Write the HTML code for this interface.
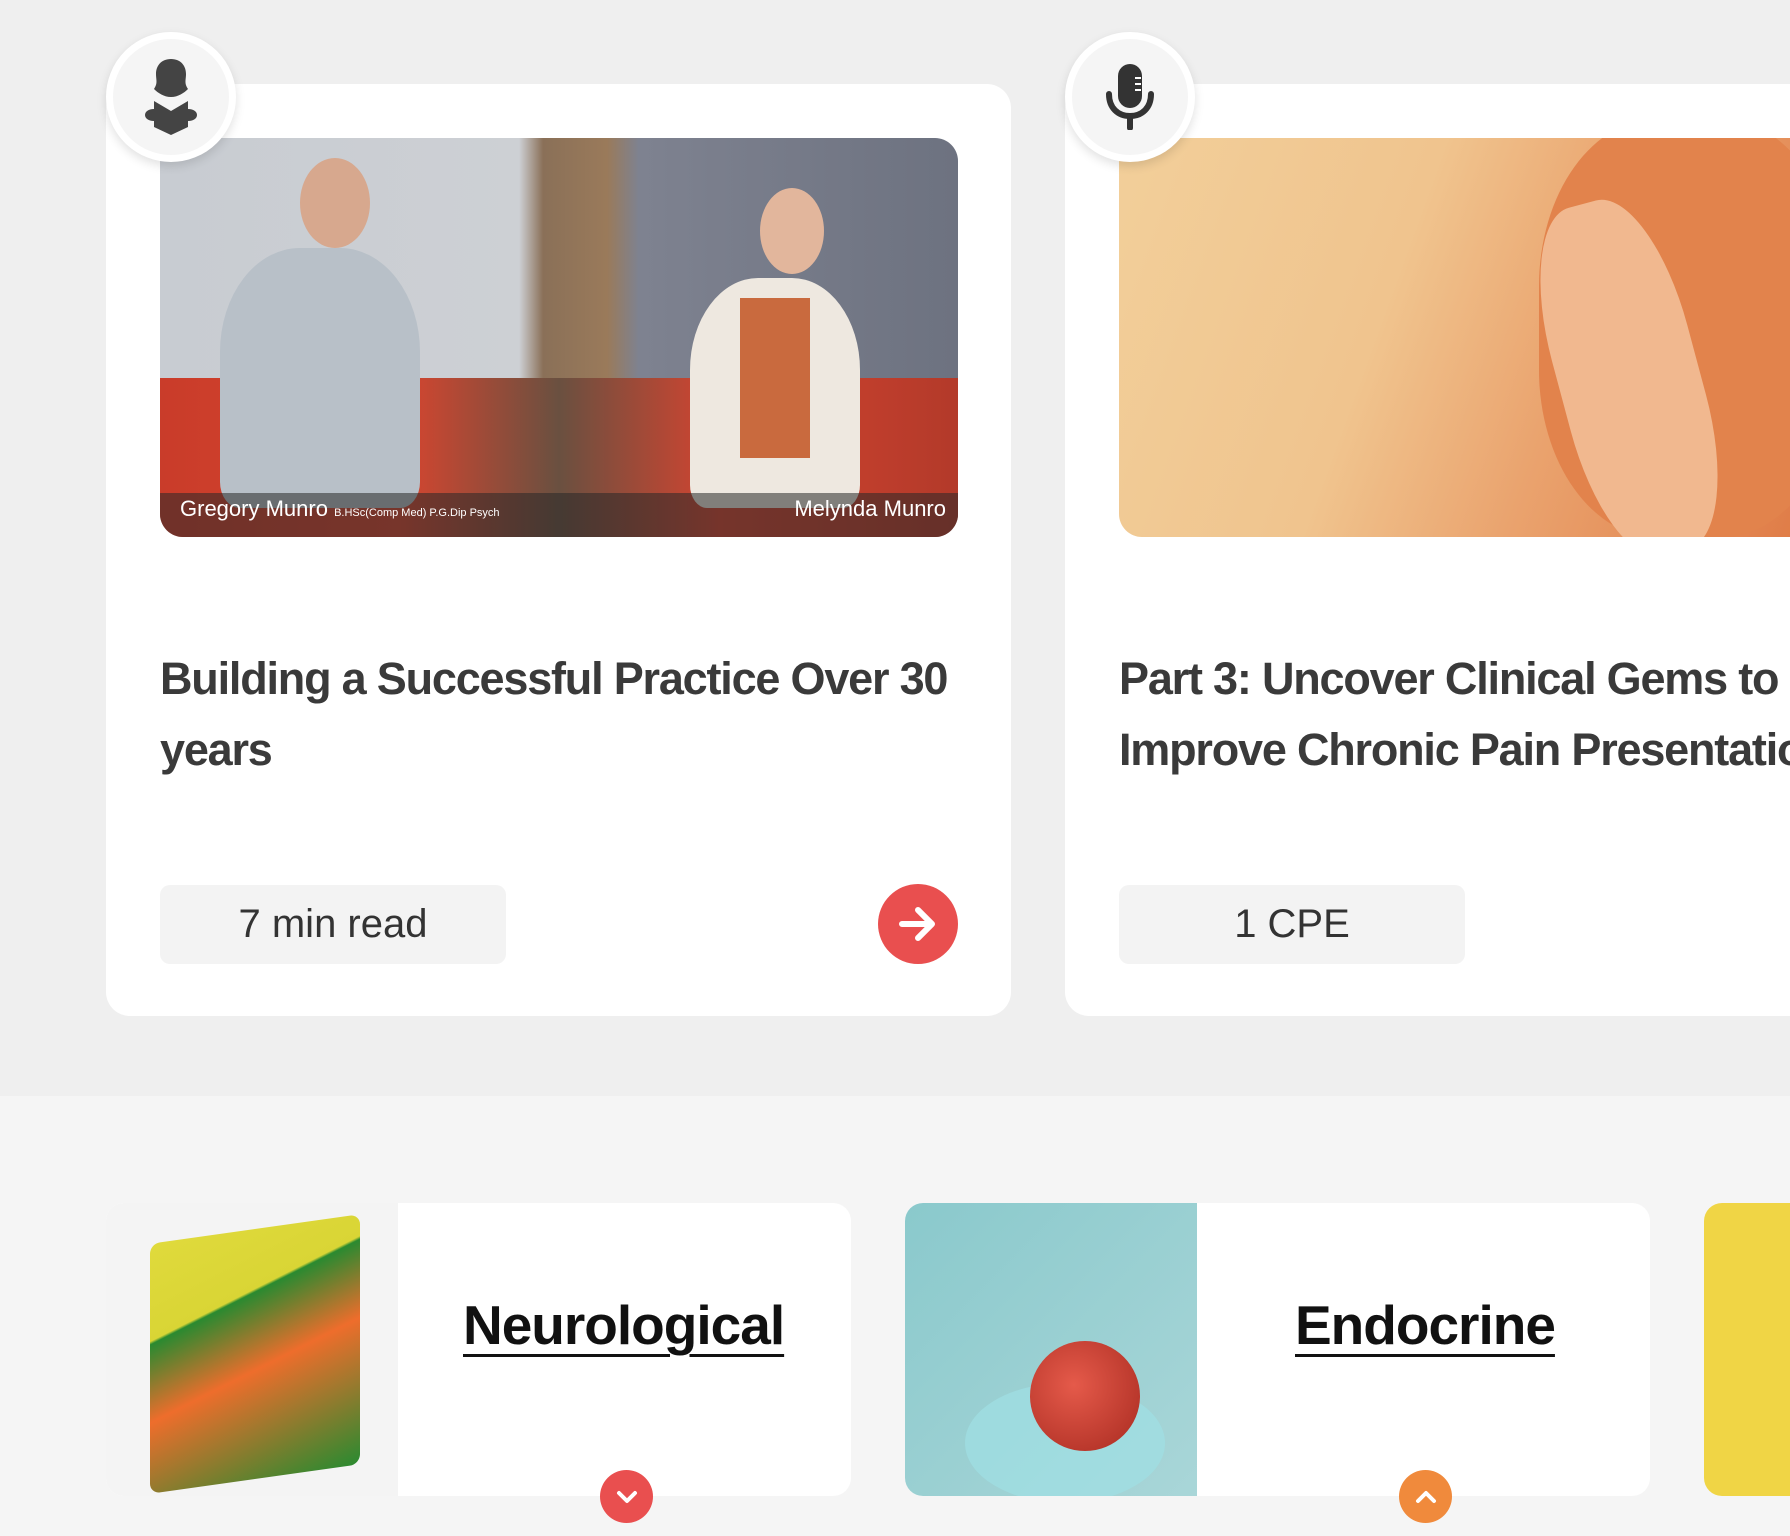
<!DOCTYPE html>
<html><head><meta charset="utf-8"><style>
*{margin:0;padding:0;box-sizing:border-box}
html{width:1790px;height:1536px;overflow:hidden}
body{width:1790px;height:1536px;overflow:hidden;background:#efefef;font-family:"Liberation Sans",sans-serif;position:relative;color:#333}
.abs{position:absolute}
.card{background:#fff;border-radius:24px}
.ico{width:130px;height:130px;border-radius:50%;background:#f5f5f5;border:7px solid #fff;box-shadow:0 4px 10px rgba(0,0,0,.12);display:flex;align-items:center;justify-content:center}
.title{font-size:45px;font-weight:bold;line-height:71px;color:#3a3a3a;letter-spacing:-1.2px}
.pill{background:#f3f3f3;border-radius:10px;font-size:40px;display:flex;align-items:center;justify-content:center;color:#333}
.bot{background:#f5f5f5}
.cat{font-size:55px;font-weight:bold;color:#111;text-decoration:underline;text-underline-offset:10px;text-decoration-thickness:3px;letter-spacing:-1px}
.chev{width:53px;height:53px;border-radius:50%;display:flex;align-items:center;justify-content:center}
</style></head><body>
<div class="abs card" style="left:106px;top:84px;width:905px;height:932px"></div>
<div class="abs card" style="left:1065px;top:84px;width:725px;height:932px;border-radius:24px 0 0 24px"></div>

<div class="abs" style="left:160px;top:138px;width:798px;height:399px;border-radius:23px;overflow:hidden;background:linear-gradient(90deg,#c8ccd2 0%,#cdd0d4 45%,#8a7058 48%,#9a7a5a 56%,#7e8290 60%,#6d7280 100%)">
 <div class="abs" style="left:0;top:240px;width:798px;height:160px;background:linear-gradient(90deg,#c93c2a,#d8452f 30%,#6a5040 50%,#d44430 70%,#b33a2a)"></div>
 <div class="abs" style="left:60px;top:110px;width:200px;height:260px;border-radius:40% 40% 10% 10%;background:#b8c0c8"></div>
 <div class="abs" style="left:140px;top:20px;width:70px;height:90px;border-radius:50%;background:#d7a88e"></div>
 <div class="abs" style="left:530px;top:140px;width:170px;height:230px;border-radius:40% 40% 10% 10%;background:#eee8e0"></div>
 <div class="abs" style="left:580px;top:160px;width:70px;height:160px;background:#c96a3e"></div>
 <div class="abs" style="left:600px;top:50px;width:64px;height:86px;border-radius:50%;background:#e2b69c"></div>
 <div class="abs" style="left:0;top:355px;width:798px;height:44px;background:rgba(40,40,40,.55)"></div>
 <div class="abs" style="left:20px;top:358px;color:#fff;font-size:22px">Gregory Munro <span style="font-size:11px">B.HSc(Comp Med) P.G.Dip Psych</span></div>
 <div class="abs" style="right:12px;top:358px;color:#fff;font-size:22px">Melynda Munro</div>
</div>

<div class="abs" style="left:1119px;top:138px;width:671px;height:399px;border-radius:23px 0 0 23px;overflow:hidden;background:linear-gradient(110deg,#f2cf9a 0%,#f0c48e 40%,#eaa36e 65%,#e07d48 100%)">
 <div class="abs" style="left:420px;top:-20px;width:300px;height:420px;border-radius:40%;background:#e2834c"></div>
 <div class="abs" style="left:440px;top:60px;width:140px;height:360px;border-radius:40%;background:#f1b88f;transform:rotate(-15deg)"></div>
</div>

<div class="abs ico" style="left:106px;top:32px">
<svg width="60" height="76" viewBox="0 0 60 76"><path d="M30 0C20 0 15 7 15 15c0 6 2 9 -2 15c4 4 10 8 17 8s13-4 17-8c-4-6-2-9-2-15C45 7 40 0 30 0z" fill="#444"/><path d="M13 42l17 10 17-10v8c6 0 9 3 9 6s-3 6-9 6v6l-17 8-17-8v-6c-6 0-9-3-9-6s3-6 9-6z" fill="#444"/></svg>
</div>
<div class="abs ico" style="left:1065px;top:32px">
<svg width="50" height="66" viewBox="0 0 50 66"><rect x="13" y="0" width="24" height="44" rx="12" fill="#333"/><path d="M4 30c0 14 9 22 21 22s21-8 21-22" fill="none" stroke="#333" stroke-width="6" stroke-linecap="round"/><path d="M25 52v12" stroke="#333" stroke-width="6" stroke-linecap="round"/><path d="M30 14h6M30 20h6M30 26h6" stroke="#fff" stroke-width="2"/></svg>
</div>

<div class="abs title" style="left:160px;top:643px;width:800px">Building a Successful Practice Over 30<br>years</div>
<div class="abs title" style="left:1119px;top:643px;width:800px;white-space:nowrap">Part 3: Uncover Clinical Gems to<br>Improve Chronic Pain Presentations</div>

<div class="abs pill" style="left:160px;top:885px;width:346px;height:79px">7 min read</div>
<div class="abs pill" style="left:1119px;top:885px;width:346px;height:79px">1 CPE</div>
<div class="abs" style="left:878px;top:884px;width:80px;height:80px;border-radius:50%;background:#e94f4f;display:flex;align-items:center;justify-content:center">
<svg width="40" height="36" viewBox="0 0 40 36"><path d="M4 18h30M20 4l14 14-14 14" fill="none" stroke="#fff" stroke-width="6" stroke-linecap="round" stroke-linejoin="round"/></svg></div>

<div class="abs bot" style="left:0;top:1096px;width:1790px;height:440px"></div>

<div class="abs card" style="left:106px;top:1203px;width:745px;height:293px;border-radius:18px;overflow:hidden">
 <div class="abs" style="left:0;top:0;width:292px;height:293px;background:#f4f4f4">
  <div class="abs" style="left:44px;top:26px;width:210px;height:250px;background:linear-gradient(160deg,#e0da3c 0%,#d9d535 30%,#2a8a30 31%,#ee6d2c 55%,#2a8a30 100%);transform:skewY(-8deg);border-radius:10px"></div>
 </div>
</div>
<div class="abs card" style="left:905px;top:1203px;width:745px;height:293px;border-radius:18px;overflow:hidden">
 <div class="abs" style="left:0;top:0;width:292px;height:293px;background:linear-gradient(135deg,#8ac9cc,#a9d6d8)">
  <div class="abs" style="left:60px;top:180px;width:200px;height:120px;border-radius:50%;background:#9fe0e4;opacity:.7"></div>
  <div class="abs" style="left:125px;top:138px;width:110px;height:110px;border-radius:50%;background:radial-gradient(circle at 40% 40%,#e55a4a,#a82a20)"></div>
 </div>
</div>
<div class="abs card" style="left:1704px;top:1203px;width:86px;height:293px;border-radius:18px 0 0 18px;background:#f0d545"></div>

<div class="abs cat" style="left:463px;top:1293px">Neurological</div>
<div class="abs cat" style="left:1295px;top:1293px">Endocrine</div>

<div class="abs chev" style="left:600px;top:1470px;background:#e94f4f"><svg width="22" height="14" viewBox="0 0 22 14"><path d="M3 3l8 8 8-8" fill="none" stroke="#fff" stroke-width="4" stroke-linecap="round" stroke-linejoin="round"/></svg></div>
<div class="abs chev" style="left:1399px;top:1470px;background:#f08a3c"><svg width="22" height="14" viewBox="0 0 22 14"><path d="M3 11l8-8 8 8" fill="none" stroke="#fff" stroke-width="4" stroke-linecap="round" stroke-linejoin="round"/></svg></div>
</body></html>
